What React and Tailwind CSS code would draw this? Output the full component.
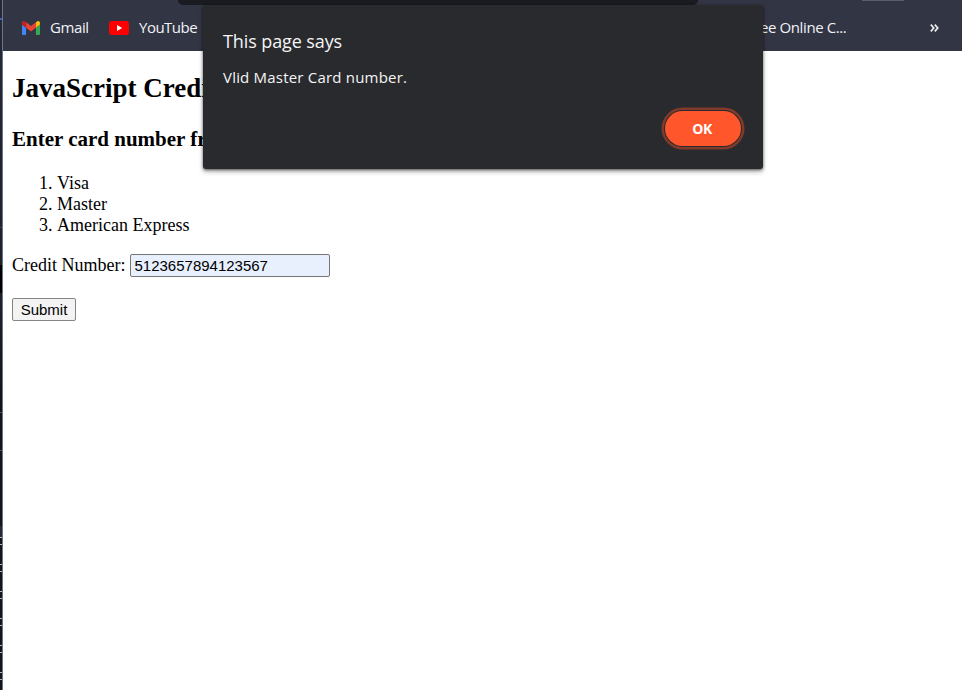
import React from "react";

const notches = ["one", "two", "three", "four", "five", "six"];

function WindowEdge() {
  return (
    <div className="flex h-full w-[3px] shrink-0 border-r border-[#6b7488]">
      <div className="flex h-full w-[2px] flex-col bg-[#14151b] *:shrink-0">
        <div className="h-[18px] bg-[#252838]" />
        <div className="h-[2px] bg-[#3f62b5]" />
        <div className="h-[207px] bg-linear-to-b from-[#252838] to-[#20222c]" />
        <div className="h-px bg-[#42454d]" />
        <div className="h-[37px] bg-[#20222a]" />
        <div className="h-[28px] bg-black" />
        <div className="h-[119px] bg-linear-to-b from-[#20222a] to-[#111216]" />
        <div className="h-px bg-[#50525a]" />
        <div className="h-[37px]" />
        <div className="h-px bg-[#50525a]" />
        <div className="h-[75px]" />
        <div className="h-[11px] bg-[#272830]" />
        {notches.map((n) => (
          <div key={n} className="h-[27px]">
            <div className="h-px bg-[#b4b6bc]" />
            <div className="h-[6px]" />
            <div className="h-px bg-[#b4b6bc]" />
          </div>
        ))}
      </div>
    </div>
  );
}

function GmailIcon() {
  return (
    <svg className="h-[14px] w-[18px] shrink-0" viewBox="52 42 88 66" preserveAspectRatio="none">
      <path fill="#4285f4" d="M58 108h14V74L52 59v43c0 3.32 2.69 6 6 6" />
      <path fill="#34a853" d="M120 108h14c3.32 0 6-2.69 6-6V59l-20 15" />
      <path fill="#fbbc04" d="M120 48v26l20-15v-8c0-7.42-8.47-11.65-14.4-7.2" />
      <path fill="#ea4335" d="M72 74V48l24 18 24-18v26L96 92" />
      <path fill="#c5221f" d="M52 51v8l20 15V48l-5.6-4.2c-5.94-4.45-14.4-.22-14.4 7.2" />
    </svg>
  );
}

function YouTubeIcon() {
  return (
    <svg className="h-[14px] w-[20px] shrink-0" viewBox="0 0 20 14">
      <rect width="20" height="14" rx="3" fill="#f00" />
      <path d="M8 4v6l5.2-3z" fill="#fff" />
    </svg>
  );
}

function BookmarksBar() {
  return (
    <div className="flex h-[51px] w-full items-center bg-[#323544] pt-[4px] pl-[19px] font-['Open_Sans',sans-serif] text-[15px] text-[#f1f2f4]">
      <GmailIcon />
      <span className="ml-[10px] w-[39px] text-[15px] tracking-[-0.4px]">Gmail</span>
      <span className="ml-[20px] flex"><YouTubeIcon /></span>
      <span className="ml-[10px] w-[60px] tracking-[-0.5px]">YouTube</span>
      <span className="ml-auto w-[90px] whitespace-nowrap tracking-[-0.4px]">ee Online C...</span>
      <svg className="mr-[23px] ml-[80px] h-[8px] w-[9px]" viewBox="0 0 9 8" fill="none" stroke="#f1f2f4" strokeWidth="1.6">
        <path d="M.8.6 3.8 4 .8 7.4M4.8.6 7.8 4l-3 3.4" />
      </svg>
    </div>
  );
}

function AlertDialog() {
  return (
    <div className="absolute top-[5px] left-[203px] flex h-[164px] w-[560px] flex-col rounded-[3px] bg-[#292a2d] px-[20px] pt-[24px] font-['Open_Sans',sans-serif] text-[#f5f5f6] shadow-[0_1px_3px_rgba(0,0,0,0.55),0_3px_5px_rgba(0,0,0,0.25)]">
      <div className="h-[24px] text-[18px] leading-[24px] tracking-[-0.1px]">This page says</div>
      <div className="mt-[14px] text-[15px] leading-[20px] tracking-[0.2px]">Vlid Master Card number.</div>
      <button className="mt-[24px] mr-[2px] ml-auto flex h-[35px] w-[76px] items-center justify-center rounded-full bg-[#ff562c] pr-[2px] text-[14px] font-bold tracking-[-0.4px] text-white shadow-[0_0_0_1px_#292a2d,0_0_0_3.5px_#7f3a2b]">
        OK
      </button>
    </div>
  );
}

export default function App() {
  return (
    <div className="relative flex h-[690px] w-[962px] overflow-hidden bg-white">
      <WindowEdge />
      <div className="flex min-w-0 flex-1 flex-col">
        <BookmarksBar />
        <main className="pl-[9px] font-['Liberation_Serif',serif] text-[18px] leading-[21px] text-black">
          <h2 className="mt-[22px] h-[30px] text-[27px] leading-[30px] font-bold">JavaScript Credit</h2>
          <h3 className="mt-[24px] h-[24px] text-[21px] leading-[24px] font-bold">Enter card number from</h3>
          <ol className="mt-[22px] list-decimal pl-[45px]">
            <li>Visa</li>
            <li>Master</li>
            <li>American Express</li>
          </ol>
          <div className="mt-[18px] flex h-[23px] items-center">
            <label htmlFor="card">Credit Number:</label>
            <input
              id="card"
              className="ml-[5px] h-[23px] w-[200px] rounded-[2px] border border-[#767676] bg-[#e8f0fe] px-[3px] font-['Liberation_Sans',sans-serif] text-[15px]"
              defaultValue="5123657894123567"
            />
          </div>
          <button className="mt-[21px] flex h-[23px] w-[64px] items-center justify-center rounded-[2px] border border-[#858585] bg-[#f3f3f3] font-['Liberation_Sans',sans-serif] text-[15px]">
            Submit
          </button>
        </main>
      </div>
      <div className="absolute top-0 left-[178px] h-[5px] w-[520px] rounded-b-[5px] bg-[#191b20]" />
      <div className="absolute top-0 left-[862px] h-px w-[42px] bg-[#5a5d70]" />
      <AlertDialog />
    </div>
  );
}
